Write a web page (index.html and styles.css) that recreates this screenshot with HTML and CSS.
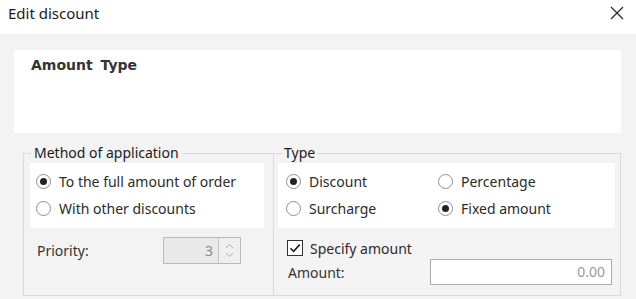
FILE: index.html
```html
<!DOCTYPE html>
<html>
<head>
<meta charset="utf-8">
<link rel="stylesheet" href="styles.css">
</head>
<body>
<div class="dialog">
  <div class="titlebar">
    <span class="title">Edit discount</span>
    <span class="close">
      <svg width="14" height="14" viewBox="0 0 14 14"><path d="M1 1 L13 13 M13 1 L1 13" stroke="#2a2a2a" stroke-width="1.3" fill="none"/></svg>
    </span>
  </div>
  <div class="content">
    <div class="header"><span class="header-title">Amount Type</span></div>
    <div class="groups">
      <fieldset class="group group-left">
        <legend>Method of application</legend>
        <div class="panel panel-list">
          <div class="opt"><span class="radio checked"></span>To the full amount of order</div>
          <div class="opt"><span class="radio"></span>With other discounts</div>
        </div>
        <div class="priority-row">
          <span class="priority-label">Priority:</span>
          <div class="spin">
            <span class="spin-val">3</span>
            <span class="spin-btns">
              <svg width="9" height="6" viewBox="0 0 9 6"><path d="M1 5 L4.5 1.5 L8 5" stroke="#a9a9a9" stroke-width="1" fill="none"/></svg>
              <svg width="9" height="6" viewBox="0 0 9 6"><path d="M1 1 L4.5 4.5 L8 1" stroke="#a9a9a9" stroke-width="1" fill="none"/></svg>
            </span>
          </div>
        </div>
      </fieldset>
      <fieldset class="group group-right">
        <legend>Type</legend>
        <div class="panel panel-grid">
          <div class="opt"><span class="radio checked"></span>Discount</div>
          <div class="opt"><span class="radio"></span>Percentage</div>
          <div class="opt"><span class="radio"></span>Surcharge</div>
          <div class="opt"><span class="radio checked"></span>Fixed amount</div>
        </div>
        <div class="check-row">
          <span class="checkbox">
            <svg width="14" height="14" viewBox="0 0 14 14"><path d="M2.5 7.2 L5.6 10.3 L11.8 3.6" stroke="#1e1e1e" stroke-width="1.6" fill="none"/></svg>
          </span>
          Specify amount
        </div>
        <div class="amount-row">
          <span class="amount-label">Amount:</span>
          <div class="amount-input">0.00</div>
        </div>
      </fieldset>
    </div>
  </div>
</div>
</body>
</html>
```

FILE: styles.css
```css
html, body {
  margin: 0;
  padding: 0;
}
body {
  width: 636px;
  height: 299px;
  overflow: hidden;
  background: #f3f3f3;
  font-family: "Noto Sans", "Open Sans", sans-serif;
  font-size: 13px;
  color: #333333;
}
.dialog {
  width: 636px;
  height: 299px;
}
.titlebar {
  height: 34px;
  background: #ffffff;
  display: flex;
  align-items: flex-start;
  justify-content: space-between;
  padding: 0 12px 0 8px;
  box-sizing: border-box;
}
.title {
  font-size: 15px;
  line-height: 26px;
  color: #1a1a1a;
}
.close {
  display: flex;
  margin-top: 6px;
}
.content {
  padding: 16px 15px 0 14px;
}
.header {
  height: 83px;
  background: #ffffff;
  box-sizing: border-box;
  padding: 5px 17px 0 17px;
}
.header-title {
  font-family: "DejaVu Sans", sans-serif;
  font-weight: bold;
  font-size: 14px;
  line-height: 20px;
  word-spacing: 3px;
  color: #333333;
}
.groups {
  display: flex;
  margin: 10px 0 0 9px;
}
.group {
  margin: 0;
  border: 1px solid #d9d9d9;
  box-sizing: border-box;
  min-width: 0;
}
.group legend {
  font-size: 14px;
  line-height: 20px;
  color: #1a1a1a;
}
.group-left {
  width: 251px;
  padding: 0 9px 31px 6px;
}
.group-left legend {
  margin-left: 1px;
  padding: 0 3px;
}
.group-right {
  flex: 1;
  border-left: none;
  padding: 0 5px 10px 4px;
}
.group-right legend {
  margin-left: 4px;
  padding: 0 2px;
}
.panel {
  background: #ffffff;
  height: 65px;
  box-sizing: border-box;
  padding: 5px 6px 6px 6px;
}
.panel-grid {
  display: grid;
  grid-template-columns: 152px 1fr;
  padding-left: 8px;
}
.opt {
  height: 27px;
  display: flex;
  align-items: center;
  font-size: 14px;
  white-space: nowrap;
  color: #2b2b2b;
}
.radio {
  width: 15px;
  height: 15px;
  box-sizing: border-box;
  border: 1px solid #8f8f8f;
  border-radius: 50%;
  margin-right: 8px;
  background: #ffffff;
  display: flex;
  align-items: center;
  justify-content: center;
  flex: none;
}
.radio.checked::after {
  content: "";
  width: 7px;
  height: 7px;
  border-radius: 50%;
  background: #222222;
}
.priority-row {
  margin-top: 9px;
  height: 27px;
  display: flex;
  align-items: center;
}
.priority-label {
  width: 133px;
  padding-left: 7px;
  box-sizing: border-box;
  font-size: 14px;
}
.spin {
  width: 78px;
  height: 27px;
  box-sizing: border-box;
  border: 1px solid #b9b9b9;
  background: #e9e9e9;
  display: flex;
}
.spin-val {
  flex: 1;
  text-align: right;
  padding-right: 5px;
  line-height: 25px;
  font-size: 14px;
  color: #8a8a8a;
}
.spin-btns {
  width: 21px;
  border-left: 1px solid #c4c4c4;
  background: #efefef;
  display: flex;
  flex-direction: column;
  align-items: center;
  justify-content: center;
  gap: 3px;
}
.check-row {
  margin-top: 9px;
  height: 22px;
  display: flex;
  align-items: center;
  padding-left: 9px;
  font-size: 14px;
  color: #2b2b2b;
}
.checkbox {
  width: 16px;
  height: 16px;
  box-sizing: border-box;
  border: 1px solid #333333;
  background: #ffffff;
  margin-right: 7px;
  display: flex;
  align-items: center;
  justify-content: center;
}
.amount-row {
  height: 26px;
  display: flex;
  align-items: center;
  padding-left: 10px;
}
.amount-label {
  flex: 1;
  font-size: 14px;
}
.amount-input {
  width: 182px;
  height: 26px;
  margin-right: 3px;
  box-sizing: border-box;
  border: 1px solid #acacac;
  background: #ffffff;
  text-align: right;
  padding-right: 6px;
  line-height: 24px;
  font-size: 14px;
  color: #9a9a9a;
}
```
